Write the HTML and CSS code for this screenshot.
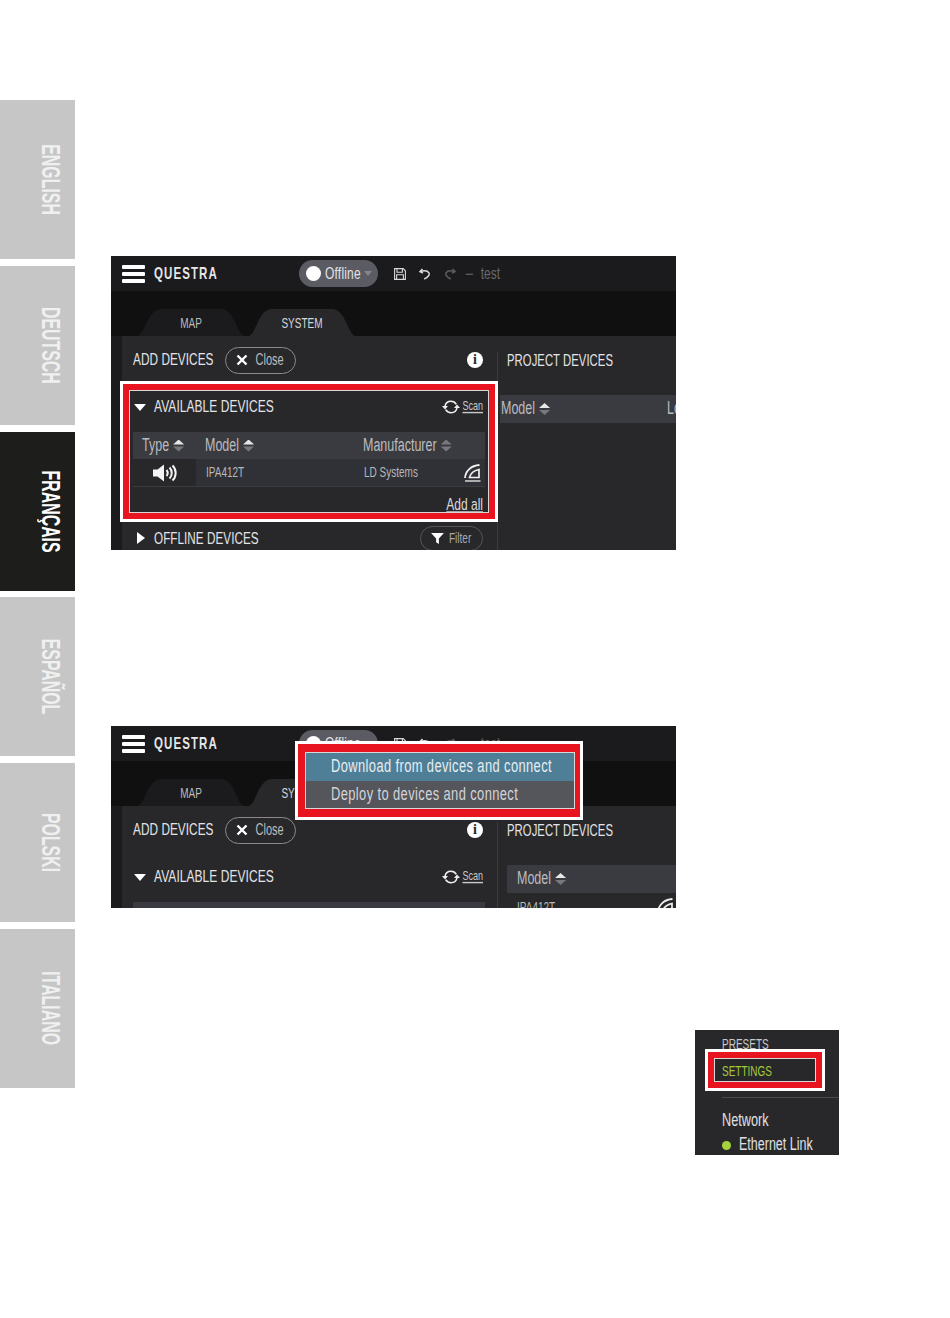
FILE: index.html
```html
<!DOCTYPE html>
<html lang="en">
<head>
    <meta charset="UTF-8">
    <title>Questra</title>
    <link rel="stylesheet" href="styles.css">
</head>
<body>
<svg class="sprites" width="0" height="0">
    <symbol id="i-save" viewBox="0 0 12 12"><path d="M.6.6h8.600l2.200 2.200v8.600H.6zM3 .6v3.600h5.400V.6M2.600 11.400V6.800h6.800v4.600" fill="none" stroke="currentColor" stroke-width="1.100"/></symbol>
    <symbol id="i-undo" viewBox="0 0 12 12"><path d="M3.500 1 1 3.600l3 1.600M1.400 3.500c3-1 7-1 8.400 1.200 1.200 2-.8 4.600-4.600 6.300" fill="none" stroke="currentColor" stroke-width="1.500"/></symbol>
    <symbol id="i-redo" viewBox="0 0 12 12"><path d="M8.500 1 11 3.600 8 5.200M10.600 3.500c-3-1-7-1-8.400 1.200-1.200 2 .8 4.600 4.600 6.300" fill="none" stroke="currentColor" stroke-width="1.500"/></symbol>
    <symbol id="i-close" viewBox="0 0 12 12"><path d="M1.500 1.500l9 9M10.500 1.500l-9 9" stroke="currentColor" stroke-width="2.400"/></symbol>
    <symbol id="i-scan" viewBox="0 0 18 14"><path d="M3 6.500C3.500 3 6 1.300 9 1.300c2.400 0 4.200 1.100 5.300 3M15 7.500c-.5 3.500-3 5.200-6 5.200-2.400 0-4.200-1.100-5.300-3" fill="none" stroke="currentColor" stroke-width="1.600"/><path d="M0 6h6L3 9.500zM12 8h6l-3-3.500z" fill="currentColor"/></symbol>
    <symbol id="i-speaker" viewBox="0 0 24 18"><path d="M0 5.500h4.500L11 .5v17l-6.500-5H0z" fill="currentColor"/><path d="M13.500 6c1.500 1.800 1.500 4.200 0 6M16.500 3.500c3 3 3 8 0 11M19.500 1.500c4.200 4 4.200 11 0 15" fill="none" stroke="currentColor" stroke-width="2"/></symbol>
    <symbol id="i-logo" viewBox="0 0 17 18"><path d="M1 14C1.500 7 7 1.500 15.500 1" fill="none" stroke="currentColor" stroke-width="1.800"/><path d="M5.500 13.500C6.500 9.500 10 6.500 15 5.500v8z" fill="none" stroke="currentColor" stroke-width="1.700"/><path d="M1 17h15.500" stroke="currentColor" stroke-width="1.300"/></symbol>
    <symbol id="i-filter" viewBox="0 0 14 12"><path d="M0 0h14L8.500 6v6l-3-2V6z" fill="currentColor"/></symbol>
</svg>

<div class="page">
    <nav class="side">
        <div class="lang"><span>ENGLISH</span></div>
        <div class="lang"><span>DEUTSCH</span></div>
        <div class="lang active"><span>FRANÇAIS</span></div>
        <div class="lang"><span>ESPAÑOL</span></div>
        <div class="lang"><span>POLSKI</span></div>
        <div class="lang"><span>ITALIANO</span></div>
    </nav>

    <main class="content">
        <div class="app shot-one">
            <div class="app-bar">
                <div class="burger"><i></i><i></i><i></i></div>
                <div class="brand"><span class="tall">QUESTRA</span></div>
                <div class="status"><b></b><span class="tall">Offline</span><em></em></div>
                <svg class="tool"><use href="#i-save"/></svg>
                <svg class="tool"><use href="#i-undo"/></svg>
                <svg class="tool dim"><use href="#i-redo"/></svg>
                <span class="dash">−</span><span class="project-name tall">test</span>
            </div>
            <div class="tab-strip">
                <div class="tab"><span class="tall">MAP</span></div>
                <div class="tab current"><span class="tall">SYSTEM</span></div>
            </div>
            <div class="panel">
                <div class="col-add">
                    <div class="add-head">
                        <span class="title tall">ADD DEVICES</span>
                        <span class="pill"><svg class="pill-x"><use href="#i-close"/></svg><span class="tall">Close</span></span>
                        <span class="info">i</span>
                    </div>
                    <div class="sec-head">
                        <span class="tri-down"></span>
                        <span class="title tall">AVAILABLE DEVICES</span>
                        <a class="scan"><svg><use href="#i-scan"/></svg><u class="tall">Scan</u></a>
                    </div>
                    <div class="grid-row grid-head">
                        <span><span class="tall">Type</span><span class="sort"></span></span>
                        <span><span class="tall">Model</span><span class="sort"></span></span>
                        <span><span class="tall">Manufacturer</span><span class="sort off"></span></span>
                    </div>
                    <div class="grid-row grid-item">
                        <span class="type-cell"><svg><use href="#i-speaker"/></svg></span>
                        <span class="small"><span class="tall">IPA412T</span></span>
                        <span class="small maker"><span class="tall">LD Systems</span><svg class="brand-logo"><use href="#i-logo"/></svg></span>
                    </div>
                    <div class="add-all"><u class="tall">Add all</u></div>
                    <div class="sec-head offline">
                        <span class="tri-right"></span>
                        <span class="title tall">OFFLINE DEVICES</span>
                        <span class="pill filter"><svg class="pill-f"><use href="#i-filter"/></svg><span class="tall">Filter</span></span>
                    </div>
                </div>
                <div class="col-project">
                    <div class="project-head"><span class="title tall">PROJECT DEVICES</span></div>
                    <div class="project-bar scrolled">
                        <span><span class="tall">Model</span><span class="sort"></span></span>
                        <span class="lo tall">Lo</span>
                    </div>
                </div>
            </div>
            <div class="mark mark-add"><div></div></div>
        </div>

        <div class="app shot-two">
            <div class="app-bar">
                <div class="burger"><i></i><i></i><i></i></div>
                <div class="brand"><span class="tall">QUESTRA</span></div>
                <div class="status"><b></b><span class="tall">Offline</span><em></em></div>
                <svg class="tool"><use href="#i-save"/></svg>
                <svg class="tool"><use href="#i-undo"/></svg>
                <svg class="tool dim"><use href="#i-redo"/></svg>
                <span class="dash">−</span><span class="project-name tall">test</span>
            </div>
            <div class="tab-strip">
                <div class="tab"><span class="tall">MAP</span></div>
                <div class="tab current"><span class="tall">SYSTEM</span></div>
            </div>
            <div class="panel">
                <div class="col-add">
                    <div class="add-head">
                        <span class="title tall">ADD DEVICES</span>
                        <span class="pill"><svg class="pill-x"><use href="#i-close"/></svg><span class="tall">Close</span></span>
                        <span class="info">i</span>
                    </div>
                    <div class="sec-head">
                        <span class="tri-down"></span>
                        <span class="title tall">AVAILABLE DEVICES</span>
                        <a class="scan"><svg><use href="#i-scan"/></svg><u class="tall">Scan</u></a>
                    </div>
                    <div class="grid-row grid-head"></div>
                </div>
                <div class="col-project">
                    <div class="project-head"><span class="title tall">PROJECT DEVICES</span></div>
                    <div class="project-bar">
                        <span><span class="tall">Model</span><span class="sort"></span></span>
                    </div>
                    <div class="project-item small"><span class="tall">IPA412T</span><svg class="brand-logo"><use href="#i-logo"/></svg></div>
                </div>
            </div>
            <div class="mark mark-menu">
                <div>
                    <div class="menu-row on"><span class="tall">Download from devices and connect</span></div>
                    <div class="menu-row"><span class="tall">Deploy to devices and connect</span></div>
                </div>
            </div>
        </div>

        <div class="app shot-three">
            <div class="side-item"><span class="tall">PRESETS</span></div>
            <div class="side-item green"><span class="tall">SETTINGS</span></div>
            <div class="side-rule"></div>
            <div class="side-net"><span class="tall">Network</span></div>
            <div class="side-link"><b></b><span class="tall">Ethernet Link</span></div>
            <div class="mark mark-settings"><div></div></div>
        </div>
    </main>
</div>
</body>
</html>
```

FILE: styles.css
```css
body {
    margin: 0;
    background: #fff;
    font-family: "Liberation Sans", sans-serif;
}
.sprites {
    position: absolute;
}
.page {
    display: flex;
}
/* the app's font is condensed, so text is set small and stretched upward */
.tall {
    display: inline-block;
    transform: translateY(-.8px) scaleY(1.42);
    white-space: nowrap;
}

/* language tabs */
.side {
    width: 75px;
    padding-top: 100px;
    display: flex;
    flex-direction: column;
    gap: 6.800px;
}
.lang {
    height: 159px;
    background: #c6c6c6;
    color: #f0f0f0;
    display: flex;
    align-items: center;
    justify-content: center;
    padding-left: 26px;
    box-sizing: border-box;
}
.lang.active {
    background: #1d1d1b;
    color: #fff;
}
.lang span {
    writing-mode: vertical-rl;
    font-size: 25px;
    font-weight: bold;
    transform: scaleY(.635);
    white-space: nowrap;
}

.content {
    padding-left: 36px;
}

/* app screenshots */
.app {
    position: relative;
    width: 565px;
    overflow: hidden;
    background: #1b1b1d;
    color: #d6d6d8;
}
.shot-one {
    margin-top: 256px;
    height: 294px;
}
.shot-two {
    margin-top: 176px;
    height: 182px;
}
.shot-three {
    margin: 122px 0 0 584px;
    width: 144px;
    height: 125px;
    background: #28282b;
}
.app-bar {
    height: 35px;
    display: flex;
    align-items: center;
    padding-left: 11px;
    background: #1b1b1d;
}
.burger {
    width: 23px;
    margin-right: 9px;
    display: flex;
    flex-direction: column;
    gap: 3px;
}
.burger i {
    height: 4px;
    background: #fff;
    border-radius: 1px;
}
.brand {
    width: 145px;
    font-size: 11.500px;
    font-weight: bold;
    letter-spacing: 1.100px;
    color: #e6e6e6;
}
.status {
    width: 79px;
    height: 27px;
    border-radius: 14px;
    background: #5b5b63;
    display: flex;
    align-items: center;
    padding-left: 7px;
    box-sizing: border-box;
    font-size: 12px;
    letter-spacing: .2px;
    color: #e2e2e4;
    margin-right: 16px;
}
.status b {
    width: 15px;
    height: 15px;
    border-radius: 50%;
    background: #fff;
    margin-right: 4px;
}
.status em {
    margin-left: 3px;
    border: 4.500px solid transparent;
    border-top: 5px solid #85858c;
    border-bottom: 0;
}
.tool {
    width: 12px;
    height: 12px;
    margin-right: 13px;
    color: #d8d8d8;
}
.tool.dim {
    color: #5c5c5f;
    margin-right: 9px;
}
.dash {
    font-size: 15px;
    margin-right: 7px;
    color: #68686c;
}
.project-name {
    font-size: 12px;
    color: #68686c;
}
.tab-strip {
    height: 45px;
    background: #101011;
    display: flex;
    align-items: flex-end;
    padding-left: 26px;
    gap: 3px;
}
.tab {
    width: 108px;
    height: 27px;
    background: #1b1b1d;
    clip-path: path("M0 27C8 27 10 0 24 0H84C98 0 100 27 108 27Z");
    font-size: 10px;
    line-height: 32px;
    text-align: center;
    color: #bcbcbe;
}
.tab.current {
    background: #28282b;
    color: #d6d6d8;
}
.panel {
    margin-left: 11px;
    background: #28282b;
    display: flex;
    height: 214px;
}
.col-add {
    width: 352px;
    padding: 0 12px 0 11px;
    flex: none;
}
.col-project {
    flex: 1;
    margin-top: 16px;
    border-left: 1px solid #3c3c40;
    min-width: 0;
}
.title {
    font-size: 12px;
    letter-spacing: .05px;
    color: #e4e4e6;
}
.add-head {
    height: 48px;
    display: flex;
    align-items: center;
}
.add-head .title {
    font-size: 11.800px;
}
.pill {
    height: 27px;
    border: 1px solid #8b8b8e;
    border-radius: 14px;
    box-sizing: border-box;
    display: inline-flex;
    align-items: center;
    font-size: 11px;
    color: #bcbcbe;
}
.add-head .pill {
    width: 71px;
    margin-left: 11px;
}
.pill-x {
    width: 12px;
    height: 12px;
    margin: 0 8px 0 10px;
    color: #fff;
}
.info {
    width: 16px;
    height: 16px;
    margin-left: auto;
    margin-right: 2px;
    border-radius: 50%;
    background: #fff;
    color: #28282b;
    font: bold 14px/16px "Liberation Serif", serif;
    text-align: center;
}
.sec-head {
    height: 46px;
    display: flex;
    align-items: center;
}
.tri-down {
    margin: 0 8px 0 1px;
    border: 6.500px solid transparent;
    border-top: 7px solid #fff;
    border-bottom: 0;
}
.tri-right {
    margin: 0 9px 0 4px;
    border: 6px solid transparent;
    border-left: 8px solid #fff;
    border-right: 0;
}
.scan {
    margin-left: auto;
    margin-right: 2px;
    display: flex;
    align-items: center;
    font-size: 9px;
    color: #c8c8ca;
}
.scan svg {
    width: 18px;
    height: 14px;
    margin-right: 2px;
    color: #f0f0f0;
}
.grid-row {
    display: grid;
    grid-template-columns: 63px 158px 1fr;
    align-items: center;
}
.grid-head {
    height: 27px;
    margin-top: 2px;
    background: #3a3b40;
    font-size: 12.500px;
    color: #bcbcbe;
}
.grid-head > span {
    padding-left: 9px;
}
.grid-item {
    height: 28px;
    background: #303136;
    border-bottom: 1px solid #3c3c40;
    box-sizing: border-box;
}
.type-cell {
    height: 100%;
    background: #28282b;
    display: flex;
    align-items: center;
    justify-content: center;
}
.type-cell svg {
    width: 24px;
    height: 18px;
    color: #f4f4f4;
}
.small {
    font-size: 10px;
    color: #b8b8ba;
    padding-left: 10px;
}
.maker {
    display: flex;
    align-items: center;
    padding-right: 4px;
}
.brand-logo {
    width: 17px;
    height: 18px;
    margin-left: auto;
    color: #f0f0f0;
}
.sort {
    display: inline-block;
    width: 11px;
    height: 12px;
    margin-left: 4px;
    vertical-align: -2px;
    background: linear-gradient(#e6e6e6 50%, #77777c 50%);
    clip-path: path("M5.500 0L11 5H0ZM5.500 12L0 7H11Z");
}
.sort.off {
    background: #77777c;
}
.add-all {
    height: 35px;
    display: flex;
    align-items: center;
    justify-content: flex-end;
    padding-right: 2px;
    font-size: 12px;
    color: #dcdcde;
}
.offline {
    height: 32px;
}
.offline .title {
    font-size: 11.700px;
}
.pill.filter {
    margin-left: auto;
    margin-right: 2px;
    width: 63px;
    height: 25px;
    border-color: #55555a;
    font-size: 10px;
    color: #a8a8aa;
}
.pill-f {
    width: 13px;
    height: 11px;
    margin: 0 5px 0 10px;
    color: #fff;
}
.project-head {
    height: 32px;
    line-height: 16px;
    padding-left: 9px;
}
.project-head .title {
    font-size: 11.300px;
}
.project-bar {
    height: 28px;
    margin-top: 11px;
    margin-left: 9px;
    padding-left: 10px;
    background: #3a3b40;
    display: flex;
    align-items: center;
    font-size: 12.500px;
    color: #bcbcbe;
}
.project-bar.scrolled {
    margin-left: 2px;
    padding-left: 1px;
}
.lo {
    margin-left: auto;
    margin-right: -5px;
}
.project-item {
    display: flex;
    align-items: center;
    height: 28px;
    margin-left: 9px;
    padding-right: 2px;
}

/* red annotation boxes */
.mark {
    position: absolute;
    box-sizing: border-box;
    border: 3px solid #fff;
}
.mark > div {
    height: 100%;
    box-sizing: border-box;
}
.mark-add {
    left: 9px;
    top: 125px;
    width: 378px;
    height: 141px;
}
.mark-add > div,
.mark-settings > div {
    border: 6px solid #e8141f;
    outline: 1px solid #d8d8d8;
    outline-offset: -7px;
}
.mark-menu {
    left: 184px;
    top: 15px;
    width: 288px;
    height: 79px;
    background: #e8141f;
    padding: 8px 5px 8px 7px;
}
.mark-menu > div {
    border: 1px solid #d8d8d8;
}
.menu-row {
    height: 27.500px;
    background: #55565c;
    padding-left: 25px;
    font-size: 12.900px;
    line-height: 28px;
    letter-spacing: .4px;
    color: #d4d4d8;
}
.menu-row.on {
    background: #4f7f97;
    color: #e6eef2;
}
.side-item {
    padding-left: 27px;
    font-size: 10px;
    height: 27px;
    line-height: 29px;
    color: #c8c8ca;
}
.side-item.green {
    color: #a2c83c;
}
.side-rule {
    height: 1px;
    margin: 13px 0 0 27px;
    background: #4a4a4d;
}
.side-net {
    margin: 13px 0 0 27px;
    font-size: 12.700px;
    line-height: 20px;
    color: #e0e0e2;
}
.side-link {
    margin: 5px 0 0 27px;
    display: flex;
    align-items: center;
    font-size: 12.500px;
    line-height: 18px;
    color: #e0e0e2;
}
.side-link b {
    width: 9px;
    height: 9px;
    border-radius: 50%;
    background: #a6d23a;
    margin-right: 8px;
}
.mark-settings {
    left: 10px;
    top: 19px;
    width: 120px;
    height: 42px;
}
```
